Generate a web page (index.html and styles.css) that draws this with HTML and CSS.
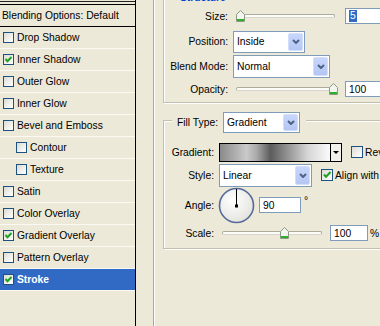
FILE: index.html
```html
<!DOCTYPE html>
<html>
	<head>
		<meta charset="utf-8" />
		<title>Layer Style</title>
		<link rel="stylesheet" href="styles.css">
	</head>
	<body>
		<div id="dialog">
			<div id="styles">
				<div class="edge"></div>
				<div class="blending">Blending Options: Default</div>
				<ul id="list">
					<li><span class="check"></span>Drop Shadow</li>
					<li><span class="check"><svg width="9" height="9"><polyline points="1.5,4 3.5,6.2 7.5,2" fill="none" stroke="#21A121" stroke-width="2"/></svg></span>Inner Shadow</li>
					<li><span class="check"></span>Outer Glow</li>
					<li><span class="check"></span>Inner Glow</li>
					<li><span class="check"></span>Bevel and Emboss</li>
					<li class="sub"><span class="check"></span>Contour</li>
					<li class="sub"><span class="check"></span>Texture</li>
					<li><span class="check"></span>Satin</li>
					<li><span class="check"></span>Color Overlay</li>
					<li><span class="check"><svg width="9" height="9"><polyline points="1.5,4 3.5,6.2 7.5,2" fill="none" stroke="#21A121" stroke-width="2"/></svg></span>Gradient Overlay</li>
					<li><span class="check"></span>Pattern Overlay</li>
					<li class="selected"><span class="check"><svg width="9" height="9"><polyline points="1.5,4 3.5,6.2 7.5,2" fill="none" stroke="#21A121" stroke-width="2"/></svg></span>Stroke</li>
				</ul>
			</div>
			<div id="gutter"></div>
			<div id="panel">
				<div class="group structure">
					<div class="legend">Structure</div>
					<div class="row r-size">
						<span class="lbl">Size:</span>
						<div class="slider">
							<span class="track"></span>
							<span class="thumb" style="left: 3px;"><svg width="9" height="12"><path d="M0.5 4.5 L4.5 0.5 L8.5 4.5 V11.5 H0.5 Z" fill="#F4F4EF" stroke="#8C9A84"/><rect x="1" y="9" width="7" height="2" fill="#2CB02C"/></svg></span>
						</div>
						<span class="field f-size"><span class="sel">5</span></span>
					</div>
					<div class="row r-pos">
						<span class="lbl">Position:</span>
						<span class="combo c-pos"><span class="combo-text">Inside</span><span class="combo-btn"><svg width="8" height="5"><polyline points="1,1 4,4 7,1" fill="none" stroke="#4D6185" stroke-width="2"/></svg></span></span>
					</div>
					<div class="row r-blend">
						<span class="lbl">Blend Mode:</span>
						<span class="combo c-blend"><span class="combo-text">Normal</span><span class="combo-btn"><svg width="8" height="5"><polyline points="1,1 4,4 7,1" fill="none" stroke="#4D6185" stroke-width="2"/></svg></span></span>
					</div>
					<div class="row r-opacity">
						<span class="lbl">Opacity:</span>
						<div class="slider">
							<span class="track"></span>
							<span class="thumb" style="left: 96px;"><svg width="9" height="12"><path d="M0.5 4.5 L4.5 0.5 L8.5 4.5 V11.5 H0.5 Z" fill="#F4F4EF" stroke="#8C9A84"/><rect x="1" y="9" width="7" height="2" fill="#2CB02C"/></svg></span>
						</div>
						<span class="field f-size">100</span>
					</div>
				</div>

				<div class="group fill">
					<div class="legend fill-type">
						<span>Fill Type:</span>
						<span class="combo c-fill"><span class="combo-text">Gradient</span><span class="combo-btn"><svg width="8" height="5"><polyline points="1,1 4,4 7,1" fill="none" stroke="#4D6185" stroke-width="2"/></svg></span></span>
					</div>
					<div class="row r-grad">
						<span class="lbl">Gradient:</span>
						<span class="swatch"><span class="ramp"></span><span class="drop"><span class="tri"></span></span></span>
						<span class="check big"></span>
						<span class="opt">Reverse</span>
					</div>
					<div class="row r-style">
						<span class="lbl">Style:</span>
						<span class="combo c-style"><span class="combo-text">Linear</span><span class="combo-btn"><svg width="8" height="5"><polyline points="1,1 4,4 7,1" fill="none" stroke="#4D6185" stroke-width="2"/></svg></span></span>
						<span class="check big"><svg width="10" height="10"><polyline points="2,4.5 4,6.8 8.5,2" fill="none" stroke="#21A121" stroke-width="2"/></svg></span>
						<span class="opt">Align with Layer</span>
					</div>
					<div class="row r-angle">
						<span class="lbl">Angle:</span>
						<svg class="dial" width="37" height="37">
							<defs>
								<radialGradient id="dialbg" cx="40%" cy="35%" r="70%">
									<stop offset="0" stop-color="#FFFFFF"/>
									<stop offset="1" stop-color="#E2E2DC"/>
								</radialGradient>
							</defs>
							<circle cx="18.5" cy="18.5" r="17" fill="url(#dialbg)" stroke="#55699A" stroke-width="1.6"/>
							<line x1="18.5" y1="2" x2="18.5" y2="19" stroke="#000"/>
							<rect x="17" y="17.5" width="3" height="3" fill="#000"/>
						</svg>
						<span class="field f-angle">90</span>
						<span class="deg">°</span>
					</div>
					<div class="row r-scale">
						<span class="lbl">Scale:</span>
						<div class="slider s-scale">
							<span class="track"></span>
							<span class="thumb" style="left: 61px;"><svg width="9" height="12"><path d="M0.5 4.5 L4.5 0.5 L8.5 4.5 V11.5 H0.5 Z" fill="#F4F4EF" stroke="#8C9A84"/><rect x="1" y="9" width="7" height="2" fill="#2CB02C"/></svg></span>
						</div>
						<span class="field f-scale">100</span>
						<span class="pct">%</span>
					</div>
				</div>
			</div>
		</div>
	</body>
</html>
```

FILE: styles.css
```css
* {
	margin: 0;
	padding: 0;
	box-sizing: border-box;
}

body {
	background: #ECE9D8;
	font: 10.3px "Liberation Sans", Arial, sans-serif;
	color: #000;
	overflow: hidden;
}

#dialog {
	display: flex;
	width: 380px;
	height: 326px;
	overflow: hidden;
	white-space: nowrap;
}

/* style list on the left */
#styles {
	width: 136px;
	flex: none;
	border-right: 1px solid #000;
}

.edge {
	height: 4px;
	margin-top: 1px;
	border-top: 1px solid #222;
	border-bottom: 1px solid #000;
}

.blending {
	height: 22px;
	line-height: 21px;
	padding-left: 2px;
	border-bottom: 1px solid #000;
}

#list li {
	list-style: none;
	display: flex;
	align-items: center;
	gap: 3px;
	height: 22px;
	padding-left: 3px;
	border-bottom: 1px solid #FAF9F3;
}

#list li.sub {
	padding-left: 16px;
}

#list li.selected {
	background: #316AC5;
	color: #fff;
	font-weight: bold;
}

.check {
	display: flex;
	align-items: center;
	justify-content: center;
	flex: none;
	width: 11px;
	height: 11px;
	border: 1px solid #1C5180;
	background: linear-gradient(135deg, #DCDCD5, #FFFFFF);
}

.check.big {
	width: 12px;
	height: 12px;
	margin-left: 9px;
}

.opt {
	margin-left: 2px;
}

#gutter {
	width: 18px;
	flex: none;
	border-right: 1px solid #ACA899;
}

#panel {
	width: 300px;
	flex: none;
	border-left: 1px solid #fff;
	padding-left: 8px;
}

/* group boxes */
.group {
	position: relative;
	border: 1px solid #C2BFAF;
	box-shadow: inset 1px 1px 0 #fff, 1px 1px 0 #fff;
}

.legend {
	position: absolute;
	background: #ECE9D8;
	line-height: 12px;
}

.structure {
	margin-top: -3px;
	padding: 8px 0 3px;
}

.structure .legend {
	top: -6px;
	left: 13px;
	padding: 0 3px;
	font-weight: bold;
	color: #0046D5;
}

.fill {
	margin-top: 17px;
	padding: 20px 0 5px;
}

.fill-type {
	display: flex;
	align-items: center;
	top: -9px;
	left: 8px;
	padding: 0 6px 0 5px;
}

.fill-type .combo {
	margin-left: 5px;
}

.row {
	display: flex;
	align-items: center;
}

.lbl {
	flex: none;
	text-align: right;
}

.structure .lbl {
	width: 64px;
	margin-right: 5px;
}

.fill .lbl {
	width: 50px;
	margin-right: 5px;
}

.r-size {
	height: 20px;
}

.r-pos {
	height: 23px;
	margin-top: 4px;
}

.r-blend {
	height: 24px;
	margin-top: 1px;
}

.r-opacity {
	height: 20px;
	margin-top: 1px;
}

.r-grad {
	height: 22px;
}

.r-style {
	height: 24px;
}

.r-angle {
	height: 36px;
}

.r-scale {
	height: 20px;
}

/* combo boxes */
.combo {
	display: flex;
	flex: none;
	background: #fff;
	border: 1px solid #7F9DB9;
}

.combo-text {
	flex: 1;
	padding-left: 3px;
	display: flex;
	align-items: center;
}

.combo-btn {
	display: flex;
	align-items: center;
	justify-content: center;
	width: 15px;
	margin: 1px;
	border: 1px solid #D2DEFB;
	border-radius: 2px;
	background: linear-gradient(#C8D6FB, #B4C6F4);
}

.c-pos {
	width: 72px;
	height: 22px;
}

.c-blend {
	width: 97px;
	height: 23px;
}

.c-fill {
	width: 77px;
	height: 21px;
}

.c-style {
	width: 93px;
	height: 23px;
}

/* text fields */
.field {
	display: flex;
	align-items: center;
	flex: none;
	height: 16px;
	padding-left: 3px;
	background: #fff;
	border: 1px solid #7F9DB9;
}

.f-size {
	width: 40px;
	margin-left: 7px;
}

.f-angle {
	width: 42px;
	margin-left: 4px;
}

.f-scale {
	width: 38px;
	margin-left: 5px;
}

.sel {
	background: #316AC5;
	color: #fff;
	line-height: 12px;
	padding: 0 1px;
}

.deg {
	align-self: flex-start;
	margin: 8px 0 0 3px;
}

.pct {
	margin-left: 2px;
}

/* sliders */
.slider {
	position: relative;
	display: flex;
	align-items: center;
	flex: none;
	width: 105px;
	height: 14px;
	padding: 0 3px;
}

.s-scale {
	width: 106px;
}

.track {
	flex: 1;
	height: 4px;
	border: 1px solid #ADAB9D;
	border-bottom-color: #D8D6CA;
	border-radius: 2px;
	background: #FBFBF8;
}

.thumb {
	position: absolute;
	top: 1px;
	width: 9px;
	height: 12px;
}

.thumb svg,
.check svg {
	display: block;
}

/* gradient swatch */
.swatch {
	display: flex;
	flex: none;
	width: 123px;
	height: 19px;
	border: 1px solid #000;
}

.ramp {
	flex: 1;
	background: linear-gradient(to right, #8A8A8A 0%, #C9C9C9 24%, #ABABAB 33%, #5C5C5C 46%, #8E8E8E 60%, #D6D6D6 80%, #FAFAFA 100%);
}

.drop {
	display: flex;
	align-items: center;
	justify-content: center;
	width: 11px;
	border-left: 1px solid #000;
	background: #F2F1EA;
}

.tri {
	width: 0;
	height: 0;
	border-left: 3px solid transparent;
	border-right: 3px solid transparent;
	border-top: 3px solid #000;
}

.dial {
	flex: none;
	margin-left: -1px;
}
```
